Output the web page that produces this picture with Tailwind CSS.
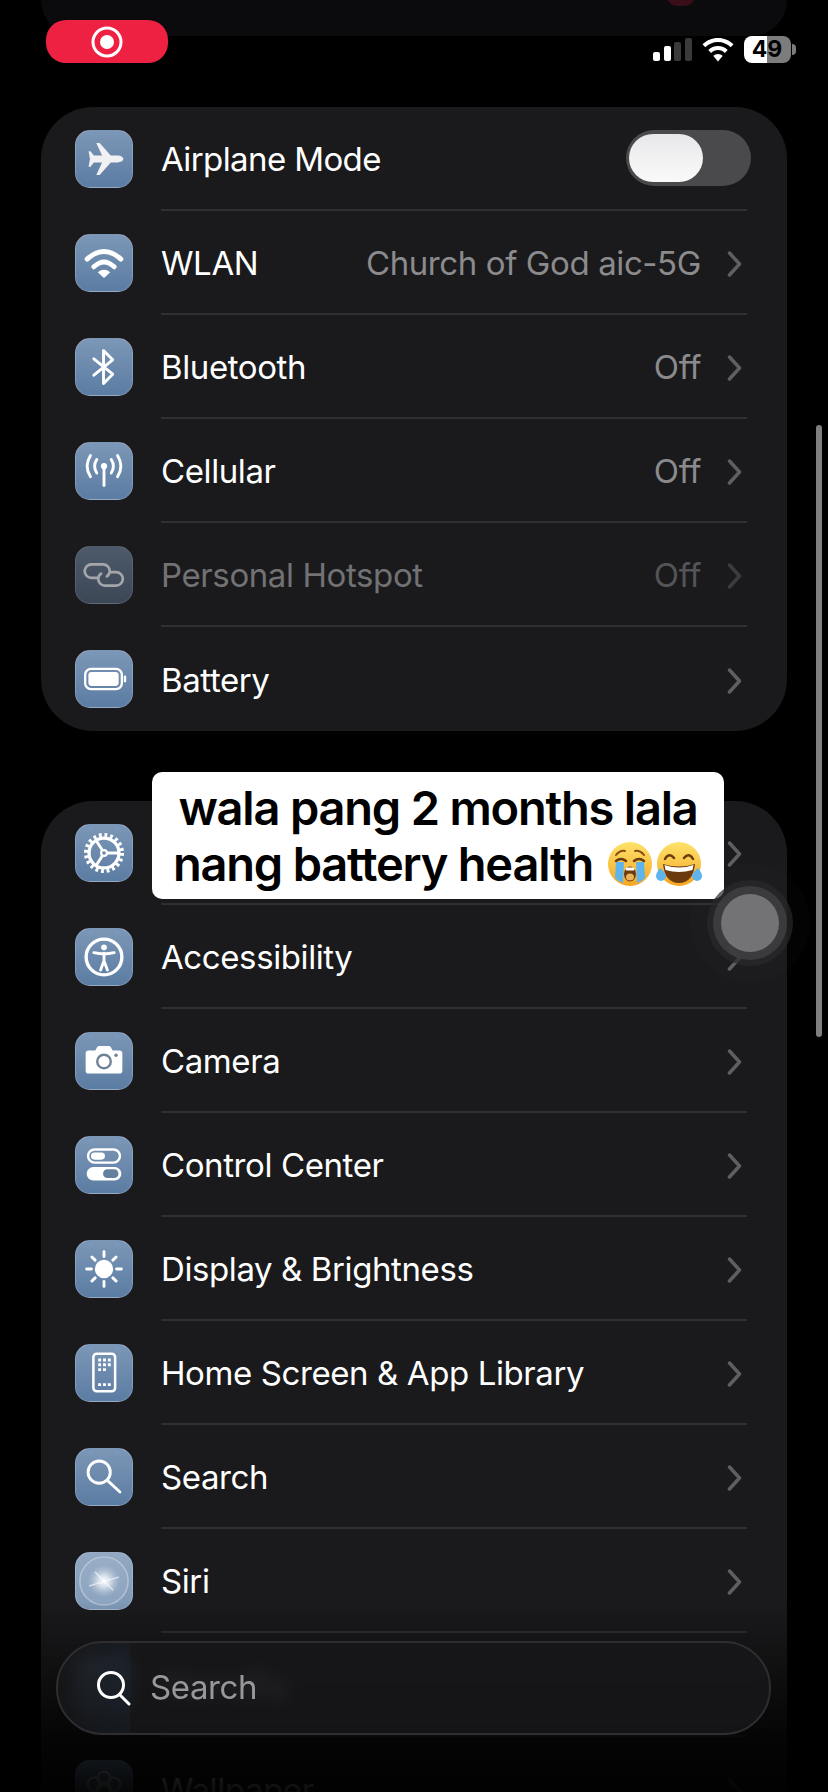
<!DOCTYPE html>
<html lang="en">
<head>
    <meta charset="UTF-8">
    <meta name="viewport" content="width=device-width, initial-scale=1.0">
    <title>Settings</title>
    <script src="https://cdn.jsdelivr.net/npm/@tailwindcss/browser@4"></script>
</head>
<body class="bg-black text-white [font-family:Inter,sans-serif] tracking-[-0.4px]">
<div class="relative w-[828px] h-[1792px] overflow-hidden bg-black">

    <!-- Previous card, scrolled away -->
    <div class="relative mx-[41px] h-[36px] rounded-b-[40px] bg-[#0b0b0d]">
        <div class="absolute left-[626px] top-[-14px] w-[28px] h-[20px] rounded-full bg-[#3a0e18]"></div>
    </div>

    <!-- Connectivity card -->
    <div class="mx-[41px] mt-[71px] rounded-[52px] bg-[#1a1a1c]">
        <div class="flex h-[104px] items-center pl-[34px]">
            <div class="flex h-[58px] w-[58px] shrink-0 items-center justify-center rounded-[15px] border border-white/20 bg-linear-to-b from-[#7c97b6] to-[#5b7ca3]">
                <svg width="58" height="58" viewBox="0 0 58 58" fill="#f1f1f3"><path d="M49 29c0-2-3-3.500-6-3.500l-7 0L24.500 12.500 21 12.500l6 13-8.500 0L15 21l-2 0 1.500 8-1.500 8 2 0 3.500-4.500 8.500 0-6 13 3.500 0L36 32.500l7 0c3 0 6-1.500 6-3.500z"/></svg>
            </div>
            <div class="ml-[28px] mr-[40px] flex h-full flex-1 items-center justify-between border-b-2 border-[#303032] pt-[4px]">
                <span class="text-[33px] tracking-[-0.6px]">Airplane Mode</span>
                <div class="mr-[-4px] mt-[-4px] flex h-[56px] w-[125px] items-center rounded-full bg-[#4a4a4d] pl-[3px]">
                    <div class="h-[48px] w-[74px] rounded-full bg-linear-to-b from-[#e8e8ea] to-[#fafafa]"></div>
                </div>
            </div>
        </div>
        <div class="flex h-[104px] items-center pl-[34px]">
            <div class="flex h-[58px] w-[58px] shrink-0 items-center justify-center rounded-[15px] border border-white/20 bg-linear-to-b from-[#7c97b6] to-[#5b7ca3]">
                <svg width="58" height="58" viewBox="0 0 58 58" fill="none" stroke="#fff" stroke-width="5" stroke-linecap="round"><path d="M11.500 25Q29 9 46.500 25"/><path d="M18.500 33Q29 23 39.500 33"/><path d="M29 44.500L22.500 38.500Q29 33.500 35.500 38.500Z" fill="#fff" stroke="none"/></svg>
            </div>
            <div class="ml-[28px] mr-[40px] flex h-full flex-1 items-center justify-between border-b-2 border-[#303032] pt-[4px]">
                <span class="text-[33px]">WLAN</span>
                <div class="flex items-center gap-[26px] pr-[5px]">
                    <span class="text-[33px] text-[#8b8b8e]">Church of God aic-5G</span>
                    <svg width="15" height="26" viewBox="0 0 15 26" fill="none" stroke="#5f5f62" stroke-width="3.500" stroke-linecap="round" stroke-linejoin="round"><path d="M2.500 2L12.500 13L2.500 24"/></svg>
                </div>
            </div>
        </div>
        <div class="flex h-[104px] items-center pl-[34px]">
            <div class="flex h-[58px] w-[58px] shrink-0 items-center justify-center rounded-[15px] border border-white/20 bg-linear-to-b from-[#7c97b6] to-[#5b7ca3]">
                <svg width="58" height="58" viewBox="0 0 58 58" fill="none" stroke="#fff" stroke-width="3" stroke-linecap="round" stroke-linejoin="round"><path d="M18.500 20.500L38 36.500L28.500 46L28.500 12L38 21.500L18.500 37.500"/></svg>
            </div>
            <div class="ml-[28px] mr-[40px] flex h-full flex-1 items-center justify-between border-b-2 border-[#303032] pt-[4px]">
                <span class="text-[33px]">Bluetooth</span>
                <div class="flex items-center gap-[26px] pr-[5px]">
                    <span class="text-[33px] text-[#8b8b8e]">Off</span>
                    <svg width="15" height="26" viewBox="0 0 15 26" fill="none" stroke="#5f5f62" stroke-width="3.500" stroke-linecap="round" stroke-linejoin="round"><path d="M2.500 2L12.500 13L2.500 24"/></svg>
                </div>
            </div>
        </div>
        <div class="flex h-[104px] items-center pl-[34px]">
            <div class="flex h-[58px] w-[58px] shrink-0 items-center justify-center rounded-[15px] border border-white/20 bg-linear-to-b from-[#7c97b6] to-[#5b7ca3]">
                <svg width="58" height="58" viewBox="0 0 58 58" fill="none" stroke="#fff" stroke-width="3" stroke-linecap="round"><path d="M29 26V44"/><circle cx="29" cy="24" r="3.200" fill="#fff" stroke="none"/><path d="M21.500 17Q17 24 21.500 31"/><path d="M36.500 17Q41 24 36.500 31"/><path d="M15 13Q8 24 15 35"/><path d="M43 13Q50 24 43 35"/></svg>
            </div>
            <div class="ml-[28px] mr-[40px] flex h-full flex-1 items-center justify-between border-b-2 border-[#303032] pt-[4px]">
                <span class="text-[33px]">Cellular</span>
                <div class="flex items-center gap-[26px] pr-[5px]">
                    <span class="text-[33px] text-[#8b8b8e]">Off</span>
                    <svg width="15" height="26" viewBox="0 0 15 26" fill="none" stroke="#5f5f62" stroke-width="3.500" stroke-linecap="round" stroke-linejoin="round"><path d="M2.500 2L12.500 13L2.500 24"/></svg>
                </div>
            </div>
        </div>
        <div class="flex h-[104px] items-center pl-[34px]">
            <div class="flex h-[58px] w-[58px] shrink-0 items-center justify-center rounded-[15px] border border-white/10 bg-linear-to-b from-[#4d5a6a] to-[#3c4756]">
                <svg width="58" height="58" viewBox="0 0 58 58" fill="none" stroke="#a3a6ab" stroke-width="2.800" stroke-linecap="round"><path d="M22 32H16a7 7 0 0 1 0-14H28a7 7 0 0 1 7 7a7 7 0 0 1-3 5.500"/><path d="M36 26H41.500a7 7 0 0 1 0 14H30a7 7 0 0 1-7-7a7 7 0 0 1 3-5.500"/></svg>
            </div>
            <div class="ml-[28px] mr-[40px] flex h-full flex-1 items-center justify-between border-b-2 border-[#303032] pt-[4px]">
                <span class="text-[33px] text-[#727274]">Personal Hotspot</span>
                <div class="flex items-center gap-[26px] pr-[5px]">
                    <span class="text-[33px] text-[#545456]">Off</span>
                    <svg width="15" height="26" viewBox="0 0 15 26" fill="none" stroke="#3c3c3f" stroke-width="3.500" stroke-linecap="round" stroke-linejoin="round"><path d="M2.500 2L12.500 13L2.500 24"/></svg>
                </div>
            </div>
        </div>
        <div class="flex h-[104px] items-center pl-[34px]">
            <div class="flex h-[58px] w-[58px] shrink-0 items-center justify-center rounded-[15px] border border-white/20 bg-linear-to-b from-[#7c97b6] to-[#5b7ca3]">
                <svg width="58" height="58" viewBox="0 0 58 58" fill="#fff"><rect x="9.500" y="18.500" width="38" height="21" rx="6" fill="none" stroke="#fff" stroke-width="2.400"/><rect x="12.800" y="21.800" width="31.400" height="14.400" rx="3.200"/><rect x="49.500" y="25.500" width="2.500" height="7" rx="1.200"/></svg>
            </div>
            <div class="ml-[28px] mr-[40px] flex h-full flex-1 items-center justify-between pt-[4px]">
                <span class="text-[33px]">Battery</span>
                <div class="flex items-center gap-[26px] pr-[5px]">
                    <svg width="15" height="26" viewBox="0 0 15 26" fill="none" stroke="#5f5f62" stroke-width="3.500" stroke-linecap="round" stroke-linejoin="round"><path d="M2.500 2L12.500 13L2.500 24"/></svg>
                </div>
            </div>
        </div>
    </div>

    <!-- General card, runs past the bottom of the screen -->
    <div class="mx-[41px] mt-[70px] rounded-[52px] bg-[#1a1a1c]">
        <div class="flex h-[104px] items-center pl-[34px]">
            <div class="flex h-[58px] w-[58px] shrink-0 items-center justify-center rounded-[15px] border border-white/20 bg-linear-to-b from-[#7c97b6] to-[#5b7ca3]">
                <svg width="58" height="58" viewBox="0 0 58 58" fill="none" stroke="#fff"><circle cx="29" cy="29" r="18.500" stroke-width="4.500" stroke-dasharray="2.900 2.910"/><circle cx="29" cy="29" r="15.500" stroke-width="3.400"/><circle cx="29" cy="29" r="3" stroke-width="2.200"/><path d="M32 29H45M27.500 26.500L20.500 15.500M27.500 31.500L20.500 42.500" stroke-width="3"/></svg>
            </div>
            <div class="ml-[28px] mr-[40px] flex h-full flex-1 items-center justify-between border-b-2 border-[#303032] pt-[4px]">
                <span class="text-[33px]">General</span>
                <div class="flex items-center gap-[26px] pr-[5px]">
                    <svg width="15" height="26" viewBox="0 0 15 26" fill="none" stroke="#5f5f62" stroke-width="3.500" stroke-linecap="round" stroke-linejoin="round"><path d="M2.500 2L12.500 13L2.500 24"/></svg>
                </div>
            </div>
        </div>
        <div class="flex h-[104px] items-center pl-[34px]">
            <div class="flex h-[58px] w-[58px] shrink-0 items-center justify-center rounded-[15px] border border-white/20 bg-linear-to-b from-[#7c97b6] to-[#5b7ca3]">
                <svg width="58" height="58" viewBox="0 0 58 58" fill="none" stroke="#fff" stroke-width="3" stroke-linecap="round"><circle cx="29" cy="29" r="18.500" stroke-width="3.500"/><circle cx="29" cy="19" r="3" fill="#fff" stroke="none"/><path d="M18.500 24.500Q29 27 39.500 24.500"/><path d="M29 25V33M29 33L25.500 42.500M29 33L32.500 42.500"/></svg>
            </div>
            <div class="ml-[28px] mr-[40px] flex h-full flex-1 items-center justify-between border-b-2 border-[#303032] pt-[4px]">
                <span class="text-[33px]">Accessibility</span>
                <div class="flex items-center gap-[26px] pr-[5px]">
                    <svg width="15" height="26" viewBox="0 0 15 26" fill="none" stroke="#5f5f62" stroke-width="3.500" stroke-linecap="round" stroke-linejoin="round"><path d="M2.500 2L12.500 13L2.500 24"/></svg>
                </div>
            </div>
        </div>
        <div class="flex h-[104px] items-center pl-[34px]">
            <div class="flex h-[58px] w-[58px] shrink-0 items-center justify-center rounded-[15px] border border-white/20 bg-linear-to-b from-[#7c97b6] to-[#5b7ca3]">
                <svg width="58" height="58" viewBox="0 0 58 58" fill="#fff"><path d="M13 18H20L22 14.500Q22.500 13.500 24 13.500H34Q35.500 13.500 36 14.500L38 18H45Q48 18 48 21V39Q48 42 45 42H13Q10 42 10 39V21Q10 18 13 18Z"/><circle cx="29" cy="29.500" r="7" fill="none" stroke="#6f8297" stroke-width="2.500"/><circle cx="41.500" cy="23" r="1.800" fill="#6f8297"/></svg>
            </div>
            <div class="ml-[28px] mr-[40px] flex h-full flex-1 items-center justify-between border-b-2 border-[#303032] pt-[4px]">
                <span class="text-[33px]">Camera</span>
                <div class="flex items-center gap-[26px] pr-[5px]">
                    <svg width="15" height="26" viewBox="0 0 15 26" fill="none" stroke="#5f5f62" stroke-width="3.500" stroke-linecap="round" stroke-linejoin="round"><path d="M2.500 2L12.500 13L2.500 24"/></svg>
                </div>
            </div>
        </div>
        <div class="flex h-[104px] items-center pl-[34px]">
            <div class="flex h-[58px] w-[58px] shrink-0 items-center justify-center rounded-[15px] border border-white/20 bg-linear-to-b from-[#7c97b6] to-[#5b7ca3]">
                <svg width="58" height="58" viewBox="0 0 58 58" fill="#fff"><rect x="12.500" y="13" width="33" height="13.500" rx="6.700" fill="none" stroke="#fff" stroke-width="2.500"/><rect x="15.500" y="16" width="14.500" height="7.500" rx="3.700"/><rect x="11" y="31" width="36" height="14" rx="7"/><rect x="28" y="33.500" width="16" height="9" rx="4.500" fill="#64809f"/></svg>
            </div>
            <div class="ml-[28px] mr-[40px] flex h-full flex-1 items-center justify-between border-b-2 border-[#303032] pt-[4px]">
                <span class="text-[33px]">Control Center</span>
                <div class="flex items-center gap-[26px] pr-[5px]">
                    <svg width="15" height="26" viewBox="0 0 15 26" fill="none" stroke="#5f5f62" stroke-width="3.500" stroke-linecap="round" stroke-linejoin="round"><path d="M2.500 2L12.500 13L2.500 24"/></svg>
                </div>
            </div>
        </div>
        <div class="flex h-[104px] items-center pl-[34px]">
            <div class="flex h-[58px] w-[58px] shrink-0 items-center justify-center rounded-[15px] border border-white/20 bg-linear-to-b from-[#7c97b6] to-[#5b7ca3]">
                <svg width="58" height="58" viewBox="0 0 58 58" fill="#fff" stroke="#fff" stroke-width="3" stroke-linecap="round"><circle cx="29" cy="29" r="9.500" stroke="none"/><path d="M29 11V16M29 42V47M11 29H16M42 29H47M16.500 16.500L19.800 19.800M38.200 38.200L41.500 41.500M16.500 41.500L19.800 38.200M38.200 19.800L41.500 16.500"/></svg>
            </div>
            <div class="ml-[28px] mr-[40px] flex h-full flex-1 items-center justify-between border-b-2 border-[#303032] pt-[4px]">
                <span class="text-[33px]">Display &amp; Brightness</span>
                <div class="flex items-center gap-[26px] pr-[5px]">
                    <svg width="15" height="26" viewBox="0 0 15 26" fill="none" stroke="#5f5f62" stroke-width="3.500" stroke-linecap="round" stroke-linejoin="round"><path d="M2.500 2L12.500 13L2.500 24"/></svg>
                </div>
            </div>
        </div>
        <div class="flex h-[104px] items-center pl-[34px]">
            <div class="flex h-[58px] w-[58px] shrink-0 items-center justify-center rounded-[15px] border border-white/20 bg-linear-to-b from-[#7c97b6] to-[#5b7ca3]">
                <svg width="58" height="58" viewBox="0 0 58 58" fill="#fff"><rect x="18" y="9" width="22.500" height="39" rx="3.500" fill="none" stroke="#fff" stroke-width="2.600"/><path d="M23 14h3v3h-3zM28 14h3v3h-3zM33 14h3v3h-3zM23 19h3v3h-3zM28 19h3v3h-3zM33 19h3v3h-3zM23 24h3v3h-3zM28 24h3v3h-3zM23 39.500h3v3h-3zM28 39.500h3v3h-3zM33 39.500h3v3h-3z"/></svg>
            </div>
            <div class="ml-[28px] mr-[40px] flex h-full flex-1 items-center justify-between border-b-2 border-[#303032] pt-[4px]">
                <span class="text-[33px]">Home Screen &amp; App Library</span>
                <div class="flex items-center gap-[26px] pr-[5px]">
                    <svg width="15" height="26" viewBox="0 0 15 26" fill="none" stroke="#5f5f62" stroke-width="3.500" stroke-linecap="round" stroke-linejoin="round"><path d="M2.500 2L12.500 13L2.500 24"/></svg>
                </div>
            </div>
        </div>
        <div class="flex h-[104px] items-center pl-[34px]">
            <div class="flex h-[58px] w-[58px] shrink-0 items-center justify-center rounded-[15px] border border-white/20 bg-linear-to-b from-[#7c97b6] to-[#5b7ca3]">
                <svg width="58" height="58" viewBox="0 0 58 58" fill="none" stroke="#fff" stroke-width="3" stroke-linecap="round"><circle cx="24" cy="24" r="11.500"/><path d="M32.500 32.500L45.500 44.500"/></svg>
            </div>
            <div class="ml-[28px] mr-[40px] flex h-full flex-1 items-center justify-between border-b-2 border-[#303032] pt-[4px]">
                <span class="text-[33px]">Search</span>
                <div class="flex items-center gap-[26px] pr-[5px]">
                    <svg width="15" height="26" viewBox="0 0 15 26" fill="none" stroke="#5f5f62" stroke-width="3.500" stroke-linecap="round" stroke-linejoin="round"><path d="M2.500 2L12.500 13L2.500 24"/></svg>
                </div>
            </div>
        </div>
        <div class="flex h-[104px] items-center pl-[34px]">
            <div class="flex h-[58px] w-[58px] shrink-0 items-center justify-center overflow-hidden rounded-[15px] border border-white/20 bg-linear-to-b from-[#93a9c2] to-[#7d98b6]">
                <svg width="58" height="58" viewBox="0 0 58 58" fill="none">
                    <defs>
                        <radialGradient id="siriglow"><stop offset="0" stop-color="#fff"/><stop offset=".35" stop-color="#e6edf5" stop-opacity=".8"/><stop offset="1" stop-color="#b9c9da" stop-opacity="0"/></radialGradient>
                    </defs>
                    <circle cx="29" cy="29" r="25" fill="#a5b8cd" fill-opacity=".35" stroke="#cdd9e6" stroke-opacity=".6" stroke-width="1.500"/>
                    <circle cx="29" cy="29" r="17" fill="url(#siriglow)"/>
                    <path d="M20 20L38 38M14 34L44 25" stroke="#fff" stroke-opacity=".6" stroke-width="1.500" stroke-linecap="round"/>
                </svg>
            </div>
            <div class="ml-[28px] mr-[40px] flex h-full flex-1 items-center justify-between border-b-2 border-[#303032] pt-[4px]">
                <span class="text-[33px]">Siri</span>
                <div class="flex items-center gap-[26px] pr-[5px]">
                    <svg width="15" height="26" viewBox="0 0 15 26" fill="none" stroke="#5f5f62" stroke-width="3.500" stroke-linecap="round" stroke-linejoin="round"><path d="M2.500 2L12.500 13L2.500 24"/></svg>
                </div>
            </div>
        </div>
        <div class="flex h-[104px] items-center pl-[34px]">
            <div class="flex h-[58px] w-[58px] shrink-0 items-center justify-center rounded-[15px] border border-white/20 bg-linear-to-b from-[#7c97b6] to-[#5b7ca3]"></div>
            <div class="ml-[28px] mr-[40px] flex h-full flex-1 items-center justify-between border-b-2 border-[#303032] pt-[4px]">
                <span class="text-[33px]">StandBy</span>
            </div>
        </div>
        <div class="flex h-[104px] items-center pl-[34px]">
            <div class="flex h-[58px] w-[58px] shrink-0 items-center justify-center rounded-[15px] border border-white/20 bg-linear-to-b from-[#7c97b6] to-[#5b7ca3]">
                <svg width="58" height="58" viewBox="0 0 58 58" fill="none" stroke="#fff" stroke-width="2"><circle cx="29" cy="18" r="7"/><circle cx="19" cy="24" r="7"/><circle cx="39" cy="24" r="7"/><circle cx="29" cy="29" r="7"/></svg>
            </div>
            <div class="ml-[28px] mr-[40px] flex h-full flex-1 items-center justify-between pt-[4px]">
                <span class="text-[33px]">Wallpaper</span>
                <div class="flex items-center gap-[26px] pr-[5px]">
                    <svg width="15" height="26" viewBox="0 0 15 26" fill="none" stroke="#5f5f62" stroke-width="3.500" stroke-linecap="round" stroke-linejoin="round"><path d="M2.500 2L12.500 13L2.500 24"/></svg>
                </div>
            </div>
        </div>
    </div>

    <!-- Fade at the bottom edge -->
    <div class="absolute inset-x-0 bottom-0 h-[190px] bg-linear-to-b from-black/0 via-black/80 via-70% to-black/95"></div>

    <!-- Status bar -->
    <div class="absolute left-[46px] top-[20px] flex h-[43px] w-[122px] items-center justify-center rounded-[20px] bg-[#ef2142]">
        <svg width="32" height="32" viewBox="0 0 32 32" fill="none"><circle cx="16" cy="16" r="14" stroke="#fff" stroke-width="3"/><circle cx="16" cy="16" r="7" fill="#fff"/></svg>
    </div>
    <div class="absolute left-[653px] top-[36px] flex h-[27px] items-center">
        <div class="flex h-[23px] items-end gap-[3.500px]">
            <div class="h-[9px] w-[7px] rounded-[2px] bg-white"></div>
            <div class="h-[15px] w-[7px] rounded-[2px] bg-white"></div>
            <div class="h-[19px] w-[7px] rounded-[2px] bg-[#3a3a3c]"></div>
            <div class="h-[23px] w-[7px] rounded-[2px] bg-[#3a3a3c]"></div>
        </div>
        <svg class="ml-[10px]" width="32" height="24" viewBox="0 0 32 24" fill="#fff"><path d="M16 0C10 0 4.500 2.400 0.500 6.300L3.300 9.300C6.600 6.100 11.100 4.100 16 4.100S25.400 6.100 28.700 9.300L31.500 6.300C27.500 2.400 22 0 16 0Z"/><path d="M16 8C12.200 8 8.800 9.500 6.300 12L9.100 15C10.900 13.200 13.300 12.100 16 12.100S21.100 13.200 22.900 15L25.700 12C23.200 9.500 19.800 8 16 8Z"/><path d="M16 16C14.200 16 12.600 16.700 11.400 17.900L16 23.500L20.600 17.900C19.400 16.700 17.800 16 16 16Z"/></svg>
        <div class="ml-[10px] flex h-[27px] w-[47px] items-center justify-center rounded-[8px] bg-linear-to-r from-white from-49% to-[#7c7c7c] to-49% text-[23px] font-bold leading-none tracking-normal text-black">49</div>
        <div class="ml-[1px] h-[11px] w-[4px] rounded-r-full bg-[#7c7c7c]"></div>
    </div>

    <!-- Scroll indicator -->
    <div class="absolute left-[816px] top-[425px] h-[612px] w-[6px] rounded-full bg-[#7f7f7f]"></div>

    <!-- Video caption -->
    <div class="absolute left-[152px] top-[772px] flex h-[127px] w-[572px] flex-col items-center justify-center rounded-[10px] bg-white text-[47px] font-semibold leading-[56px] tracking-[-1.2px] text-black">
        <div class="whitespace-nowrap">wala pang 2 months lala</div>
        <div class="flex items-center whitespace-nowrap">
            <span>nang battery health</span>
            <svg class="ml-[14px]" width="46" height="46" viewBox="0 0 46 46">
                <defs>
                    <linearGradient id="facea" x1="0" y1="0" x2="0" y2="1"><stop offset="0" stop-color="#fde36a"/><stop offset="1" stop-color="#f5a623"/></linearGradient>
                </defs>
                <circle cx="23" cy="23" r="22" fill="url(#facea)"/>
                <path d="M9 14Q13 9 18 10M37 14Q33 9 28 10" fill="none" stroke="#8a4b12" stroke-width="2" stroke-linecap="round"/>
                <path d="M9 20Q14 16 19 20M27 20Q32 16 37 20" fill="none" stroke="#6b3a0e" stroke-width="2.500" stroke-linecap="round"/>
                <path d="M9 21H17L16 42Q12 41 8 37Z" fill="#5db4ee"/>
                <path d="M29 21H37L38 37Q34 41 30 42Z" fill="#5db4ee"/>
                <ellipse cx="23" cy="33" rx="6" ry="7.500" fill="#6b3a0e"/>
                <ellipse cx="23" cy="36" rx="4" ry="3.500" fill="#e8b45a"/>
                <rect x="18.500" y="26.500" width="9" height="3" rx="1.500" fill="#fff"/>
            </svg>
            <svg class="ml-[2px]" width="48" height="46" viewBox="0 0 48 46">
                <defs>
                    <linearGradient id="faceb" x1="0" y1="0" x2="0" y2="1"><stop offset="0" stop-color="#fde36a"/><stop offset="1" stop-color="#f5a623"/></linearGradient>
                </defs>
                <circle cx="24" cy="23" r="22" fill="url(#faceb)"/>
                <path d="M10 18Q14 11 19 17M38 18Q34 11 29 17" fill="none" stroke="#6b3a0e" stroke-width="2.500" stroke-linecap="round"/>
                <path d="M8 23Q24 28 40 23Q38 42 24 42Q10 42 8 23Z" fill="#6b3a0e"/>
                <path d="M9.500 24Q24 29 38.500 24L37.500 29Q24 33 10.500 29Z" fill="#fff"/>
                <path d="M5 27Q1 32 1 35A5 5 0 0 0 11 35Q10 31 5 27Z" fill="#5db4ee"/>
                <path d="M43 27Q47 32 47 35A5 5 0 0 1 37 35Q38 31 43 27Z" fill="#5db4ee"/>
            </svg>
        </div>
    </div>

    <!-- AssistiveTouch button -->
    <div class="absolute left-[690px] top-[863px] flex h-[120px] w-[120px] items-center justify-center rounded-full bg-white/[0.012]">
        <div class="flex h-[86px] w-[86px] items-center justify-center rounded-full bg-[#2a2a2c]/70">
            <div class="flex h-[74px] w-[74px] items-center justify-center rounded-full bg-[#3f3f41]/85">
                <div class="h-[58px] w-[58px] rounded-full bg-[#767678]/95"></div>
            </div>
        </div>
    </div>

    <!-- Search field -->
    <div class="absolute left-[56px] top-[1641px] flex h-[94px] w-[715px] items-center overflow-hidden rounded-full border-2 border-[#2e2e30] bg-[#18181a]/85 pl-[38px] backdrop-blur-[7px]">
        <div class="absolute inset-y-0 left-0 w-[72px] bg-linear-to-r from-[#141a20]/0 to-[#1a2a3a]/30"></div>
        <svg class="relative" width="36" height="36" viewBox="0 0 36 36" fill="none" stroke="#fff" stroke-width="3" stroke-linecap="round"><circle cx="15" cy="15" r="12.500"/><path d="M23.500 24.500L33 34"/></svg>
        <span class="relative ml-[18px] text-[33px] text-[#98989a]">Search</span>
    </div>
</div>
</body>
</html>
